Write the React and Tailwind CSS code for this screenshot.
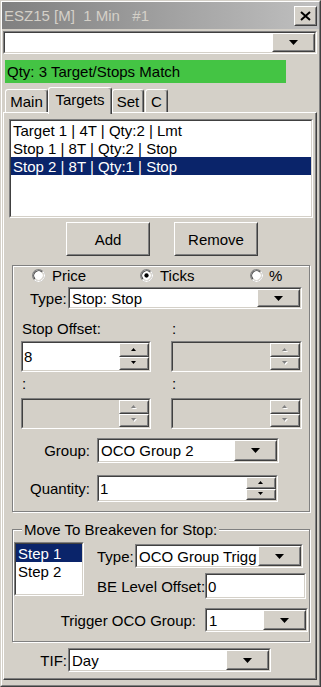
import React from 'react'

const FONT = "font-['Liberation_Sans',Arial,sans-serif]"

function Sunken({ className = '', inner = 'bg-white', children }) {
  return (
    <div className={`border border-t-[#808080] border-l-[#808080] border-r-white border-b-white ${className}`}>
      <div className={`h-full w-full border border-t-[#404040] border-l-[#404040] border-r-[#d4d0c8] border-b-[#d4d0c8] ${inner}`}>
        {children}
      </div>
    </div>
  )
}

function Raised({ className = '', children }) {
  return (
    <div className={`border border-t-white border-l-white border-r-[#404040] border-b-[#404040] bg-[#d4d0c8] ${className}`}>
      <div className="h-full w-full border border-t-[#d4d0c8] border-l-[#d4d0c8] border-r-[#808080] border-b-[#808080] flex items-center justify-center">
        {children}
      </div>
    </div>
  )
}

function DownArrow() {
  return (
    <svg width="9" height="5" viewBox="0 0 9 5">
      <path d="M0 0H9L4.5 5Z" fill="black" />
    </svg>
  )
}

function SpinArrow({ up, disabled }) {
  const d = up ? 'M0 3H5L2.5 0Z' : 'M0 0H5L2.5 3Z'
  return (
    <svg width="6" height="4" viewBox="0 0 6 4">
      {disabled && <path d={d} fill="white" transform="translate(1 1)" />}
      <path d={d} fill={disabled ? '#808080' : 'black'} />
    </svg>
  )
}

function Combo({ className = '', text }) {
  return (
    <Sunken className={className}>
      <div className="flex h-full">
        <div className="flex-1 min-w-0 pl-[2px] flex items-center overflow-hidden whitespace-nowrap">{text}</div>
        <Raised className="w-[43px] h-full shrink-0">
          <DownArrow />
        </Raised>
      </div>
    </Sunken>
  )
}

function Spinner({ className = '', text = '', disabled }) {
  return (
    <Sunken className={className} inner={disabled ? 'bg-[#d4d0c8]' : 'bg-white'}>
      <div className="flex h-full">
        <div className="flex-1 flex items-center pl-[1px]">{text}</div>
        <div className="w-[30px] flex flex-col">
          <Raised className="flex-1 min-h-0">
            <SpinArrow up disabled={disabled} />
          </Raised>
          <Raised className="flex-1 min-h-0">
            <SpinArrow disabled={disabled} />
          </Raised>
        </div>
      </div>
    </Sunken>
  )
}

function Radio({ checked }) {
  return (
    <svg width="13" height="13" viewBox="0 0 12 12" className="shrink-0">
      <circle cx="6" cy="6" r="5.5" fill="white" stroke="#808080" />
      <path d="M9.89 2.11A5.5 5.5 0 0 1 2.11 9.89" fill="none" stroke="white" />
      <path d="M9.18 2.82A4.5 4.5 0 0 0 2.82 9.18" fill="none" stroke="#404040" />
      <path d="M9.18 2.82A4.5 4.5 0 0 1 2.82 9.18" fill="none" stroke="#d4d0c8" />
      {checked && <circle cx="6" cy="6" r="2" fill="black" />}
    </svg>
  )
}

function Tab({ label, className = '', selected }) {
  return (
    <div
      className={`border border-b-0 border-t-white border-l-white border-r-[#404040] rounded-t-[3px] shadow-[inset_-1px_0_#808080] bg-[#d4d0c8] flex justify-center pt-[3px] ${
        selected ? 'relative z-10 h-[27px] -mb-[2px]' : 'h-[23px]'
      } ${className}`}
    >
      {label}
    </div>
  )
}

function Etched({ className = '', children }) {
  return (
    <div className={`ml-[8px] w-[298px] border border-[#808080] shadow-[inset_1px_1px_white,1px_1px_white] flex flex-col ${className}`}>
      {children}
    </div>
  )
}

export default function App() {
  const orders = [
    { label: 'Target 1 | 4T | Qty:2 | Lmt' },
    { label: 'Stop 1 | 8T | Qty:2 | Stop' },
    { label: 'Stop 2 | 8T | Qty:1 | Stop', selected: true },
  ]

  return (
    <div className={`w-[321px] h-[687px] bg-[#d4d0c8] border border-t-[#d4d0c8] border-l-[#d4d0c8] border-r-[#404040] border-b-[#404040] text-[15px] leading-[17px] text-black ${FONT}`}>
      <div className="h-full border border-t-white border-l-white border-r-[#808080] border-b-[#808080] flex flex-col">
        {/* title bar */}
        <div className="h-[27px] shrink-0 flex items-center bg-linear-to-r from-[#808080] to-[#c0c0c0] pl-[2px] pr-[2px]">
          <span className="flex-1 whitespace-pre text-[#d4d0c8]">ESZ15 [M]  1 Min   #1</span>
          <Raised className="w-[23px] h-[20px]">
            <svg width="11" height="10" viewBox="0 0 11 10">
              <path d="M1 1L10 9M10 1L1 9" stroke="black" strokeWidth="2" />
            </svg>
          </Raised>
        </div>

        <Combo className="mt-[2px] ml-[1px] w-[314px] h-[23px] shrink-0" text="" />

        <div className="mt-[6px] ml-[3px] w-[281px] h-[23px] shrink-0 bg-[#44c444] flex items-center pl-[2px]">
          Qty: 3 Target/Stops Match
        </div>

        {/* tabs */}
        <div className="mt-[4px] h-[25px] shrink-0 flex items-end pl-[3px]">
          <Tab label="Main" className="w-[43px]" />
          <Tab label="Targets" className="w-[64px]" selected />
          <Tab label="Set" className="w-[32px]" />
          <Tab label="C" className="w-[23px] ml-[1px]" />
        </div>

        {/* tab panel */}
        <div className="ml-[1px] w-[314px] h-[568px] shrink-0 border border-t-white border-l-white border-r-[#404040] border-b-[#404040] shadow-[inset_-1px_-1px_#808080] flex flex-col">
          <Sunken className="ml-[5px] mt-[6px] w-[304px] h-[99px]">
            {orders.map((o) => (
              <div
                key={o.label}
                className={`h-[18px] flex items-center pl-[2px] whitespace-nowrap ${o.selected ? 'bg-[#0a246a] text-white' : ''}`}
              >
                {o.label}
              </div>
            ))}
          </Sunken>

          <div className="mt-[4px] ml-[62px] flex gap-[24px]">
            <Raised className="w-[84px] h-[34px]">Add</Raised>
            <Raised className="w-[84px] h-[34px]">Remove</Raised>
          </div>

          {/* order settings */}
          <Etched className="mt-[9px] h-[247px]">
            <div className="h-[18px] flex items-center pl-[19px]">
              <div className="w-[108px] flex items-center gap-[7px]">
                <Radio />
                Price
              </div>
              <div className="w-[110px] flex items-center gap-[7px]">
                <Radio checked />
                Ticks
              </div>
              <div className="flex items-center gap-[6px]">
                <Radio />%
              </div>
            </div>

            <div className="mt-[3px] h-[22px] flex items-center pl-[17px]">
              <span className="w-[38px]">Type:</span>
              <Combo className="w-[234px] h-full" text="Stop: Stop" />
            </div>

            <div className="mt-[10px] h-[18px] flex items-center pl-[9px]">
              <span className="w-[150px]">Stop Offset:</span>
              <span>:</span>
            </div>
            <div className="mt-[4px] h-[31px] flex pl-[8px] gap-[20px]">
              <Spinner className="w-[130px] h-full" text="8" />
              <Spinner className="w-[131px] h-full" disabled />
            </div>

            <div className="mt-[2px] h-[18px] flex items-center pl-[9px]">
              <span className="w-[150px]">:</span>
              <span>:</span>
            </div>
            <div className="mt-[6px] h-[31px] flex pl-[8px] gap-[20px]">
              <Spinner className="w-[130px] h-full" disabled />
              <Spinner className="w-[131px] h-full" disabled />
            </div>

            <div className="mt-[9px] h-[25px] flex items-center">
              <span className="w-[77px] text-right">Group:</span>
              <Combo className="ml-[7px] w-[182px] h-full" text="OCO Group 2" />
            </div>
            <div className="mt-[12px] h-[27px] flex items-center">
              <span className="w-[77px] text-right">Quantity:</span>
              <Spinner className="ml-[7px] w-[181px] h-full" text="1" />
            </div>
          </Etched>

          {/* breakeven */}
          <Etched className="mt-[17px] h-[113px]">
            <div className="-mt-[9px] ml-[9px] h-[17px] w-fit px-[2px] bg-[#d4d0c8] whitespace-nowrap">
              Move To Breakeven for Stop:
            </div>
            <div className="mt-[4px] flex">
              <Sunken className="ml-[1px] w-[70px] h-[54px]">
                <div className="h-[18px] flex items-center pl-[2px] bg-[#0a246a] text-white">Step 1</div>
                <div className="h-[18px] flex items-center pl-[2px]">Step 2</div>
              </Sunken>
              <div className="ml-[13px] flex flex-col">
                <div className="mt-[2px] h-[24px] flex items-center">
                  <span className="w-[38px]">Type:</span>
                  <Combo className="w-[168px] h-full" text="OCO Group Trigg" />
                </div>
                <div className="mt-[5px] h-[26px] flex items-center">
                  <span className="w-[108px] whitespace-nowrap">BE Level Offset:</span>
                  <Sunken className="w-[101px] h-full">
                    <div className="h-full flex items-center pl-[1px]">0</div>
                  </Sunken>
                </div>
              </div>
            </div>
            <div className="mt-[9px] h-[24px] flex items-center">
              <span className="w-[183px] text-right">Trigger OCO Group:</span>
              <Combo className="ml-[9px] w-[103px] h-full" text="1" />
            </div>
          </Etched>

          <div className="mt-[6px] h-[24px] flex items-center">
            <span className="w-[63px] text-right">TIF:</span>
            <Combo className="ml-[1px] w-[203px] h-full" text="Day" />
          </div>
        </div>
      </div>
    </div>
  )
}
